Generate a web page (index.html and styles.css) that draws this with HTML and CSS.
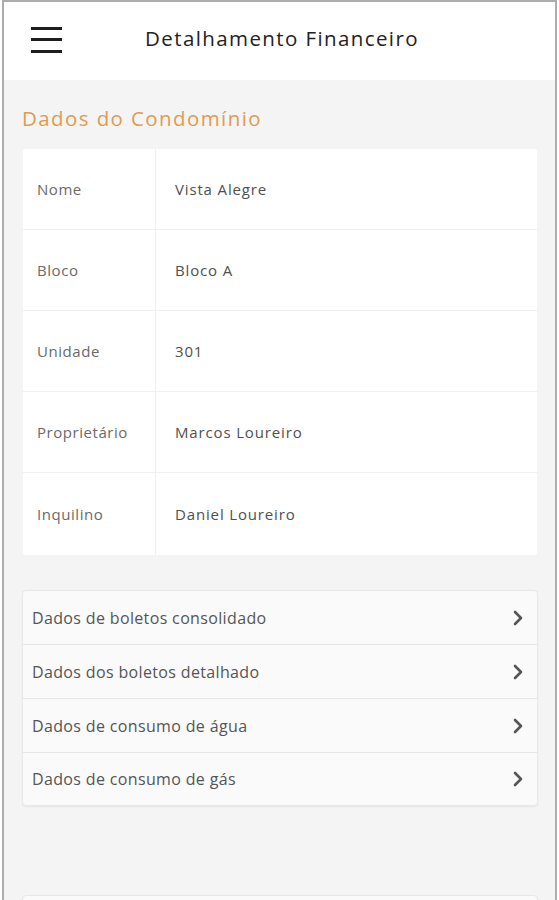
FILE: index.html
```html
<!DOCTYPE html>
<html lang="pt">
<head>
<meta charset="utf-8">
<title>Detalhamento Financeiro</title>
<link rel="stylesheet" href="styles.css">
</head>
<body>
<div class="frame">
  <header class="appbar">
    <span class="menu" aria-label="menu">
      <span class="bar"></span><span class="bar"></span><span class="bar"></span>
    </span>
    <h1 class="title">Detalhamento Financeiro</h1>
  </header>
  <main class="content">
    <h2 class="section-title">Dados do Condomínio</h2>
    <div class="info-card">
      <div class="info-row"><div class="label">Nome</div><div class="value">Vista Alegre</div></div>
      <div class="info-row"><div class="label">Bloco</div><div class="value">Bloco A</div></div>
      <div class="info-row"><div class="label">Unidade</div><div class="value">301</div></div>
      <div class="info-row"><div class="label">Proprietário</div><div class="value">Marcos Loureiro</div></div>
      <div class="info-row"><div class="label">Inquilino</div><div class="value">Daniel Loureiro</div></div>
    </div>
    <div class="list-card">
      <div class="list-item"><span>Dados de boletos consolidado</span><svg class="chev" viewBox="0 0 12 18" width="12" height="18"><path d="M3 3 L9 9 L3 15" fill="none" stroke="#555" stroke-width="2.6" stroke-linecap="round" stroke-linejoin="round"/></svg></div>
      <div class="list-item"><span>Dados dos boletos detalhado</span><svg class="chev" viewBox="0 0 12 18" width="12" height="18"><path d="M3 3 L9 9 L3 15" fill="none" stroke="#555" stroke-width="2.6" stroke-linecap="round" stroke-linejoin="round"/></svg></div>
      <div class="list-item"><span>Dados de consumo de água</span><svg class="chev" viewBox="0 0 12 18" width="12" height="18"><path d="M3 3 L9 9 L3 15" fill="none" stroke="#555" stroke-width="2.6" stroke-linecap="round" stroke-linejoin="round"/></svg></div>
      <div class="list-item"><span>Dados de consumo de gás</span><svg class="chev" viewBox="0 0 12 18" width="12" height="18"><path d="M3 3 L9 9 L3 15" fill="none" stroke="#555" stroke-width="2.6" stroke-linecap="round" stroke-linejoin="round"/></svg></div>
    </div>
    <div class="next-card"></div>
  </main>
</div>
</body>
</html>
```
FILE: styles.css
```css
html, body {
  margin: 0;
  padding: 0;
  background: #ffffff;
  font-family: "Open Sans", "Noto Sans", "Liberation Sans", sans-serif;
}
*, *::before, *::after {
  box-sizing: border-box;
}
.frame {
  margin-left: 2px;
  width: 555px;
  height: 900px;
  border: 2px solid #adadad;
  border-bottom: none;
  background: #f4f4f4;
  overflow: hidden;
  display: flex;
  flex-direction: column;
}
.appbar {
  height: 78px;
  flex: none;
  background: #ffffff;
  display: flex;
  align-items: center;
  padding-left: 27px;
}
.menu {
  width: 31px;
  display: flex;
  flex-direction: column;
  gap: 8.5px;
  margin-top: -3px;
}
.bar {
  display: block;
  height: 3px;
  background: #1d1d1d;
}
.title {
  margin: -7px 0 0 83px;
  font-size: 20.5px;
  letter-spacing: 1.4px;
  font-weight: 400;
  color: #222222;
}
.content {
  flex: 1;
  padding: 25px 18px 0 19px;
}
.section-title {
  margin: 0 0 17px -1px;
  font-size: 20.5px;
  letter-spacing: 1.4px;
  line-height: 27px;
  font-weight: 400;
  color: #e39a50;
}
.info-card {
  background: #ffffff;
  border-radius: 3px;
}
.info-row {
  display: grid;
  grid-template-columns: 133px 1fr;
  height: 81px;
  border-bottom: 1px solid #f0f0f0;
  font-size: 15px;
}
.info-row:last-child {
  border-bottom: none;
  height: 82px;
}
.label {
  display: flex;
  align-items: center;
  padding-left: 14px;
  color: #6a6a6a;
  letter-spacing: 0.55px;
  border-right: 1px solid #f0f0f0;
}
.value {
  display: flex;
  align-items: center;
  padding-left: 19px;
  color: #4f4f4f;
  letter-spacing: 0.85px;
}
.list-card {
  margin-top: 35px;
  margin-left: -1px;
  margin-right: -1px;
  background: #fafafa;
  border: 1px solid #e8e8e8;
  border-radius: 4px;
  box-shadow: 0 1px 2px rgba(0,0,0,0.06);
}
.list-item {
  height: 54px;
  display: flex;
  align-items: center;
  justify-content: space-between;
  padding: 0 13px 0 9px;
  border-bottom: 1px solid #e6e6e6;
  font-size: 16px;
  letter-spacing: 0.35px;
  color: #555555;
}
.list-item:last-child {
  border-bottom: none;
  height: 52px;
}
.chev {
  display: block;
}
.next-card {
  margin-top: 89px;
  margin-left: -1px;
  margin-right: -1px;
  height: 40px;
  background: #fafafa;
  border: 1px solid #e6e6e6;
  border-radius: 4px;
}
```
